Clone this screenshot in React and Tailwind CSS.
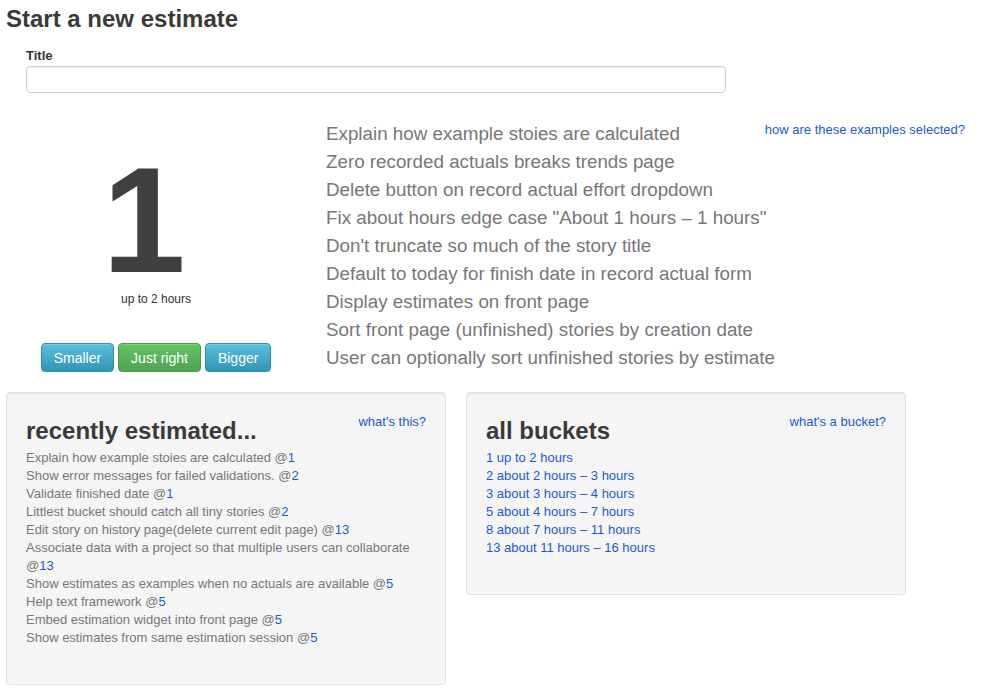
export default function App() {
  const examples = [
    "Explain how example stoies are calculated",
    "Zero recorded actuals breaks trends page",
    "Delete button on record actual effort dropdown",
    'Fix about hours edge case "About 1 hours \u2013 1 hours"',
    "Don't truncate so much of the story title",
    "Default to today for finish date in record actual form",
    "Display estimates on front page",
    "Sort front page (unfinished) stories by creation date",
    "User can optionally sort unfinished stories by estimate",
  ];
  const recent = [
    ["Explain how example stoies are calculated", "1"],
    ["Show error messages for failed validations.", "2"],
    ["Validate finished date", "1"],
    ["Littlest bucket should catch all tiny stories", "2"],
    ["Edit story on history page(delete current edit page)", "13"],
    ["Associate data with a project so that multiple users can collaborate", "13"],
    ["Show estimates as examples when no actuals are available", "5"],
    ["Help text framework", "5"],
    ["Embed estimation widget into front page", "5"],
    ["Show estimates from same estimation session", "5"],
  ];
  const buckets = [
    "1 up to 2 hours",
    "2 about 2 hours \u2013 3 hours",
    "3 about 3 hours \u2013 4 hours",
    "5 about 4 hours \u2013 7 hours",
    "8 about 7 hours \u2013 11 hours",
    "13 about 11 hours \u2013 16 hours",
  ];
  const link = "text-[#1a5bd1]";
  return (
    <div className="min-h-screen bg-white font-['Liberation_Sans',Arial,sans-serif] text-[#333]">
      <h1 className="pl-[6px] pt-0 text-[24px] font-bold leading-[38px] text-[#3a3a3a]">
        Start a new estimate
      </h1>
      <div className="pl-[26px]">
        <label className="block pt-[9px] text-[13px] font-bold leading-[18px] text-[#333]">Title</label>
        <input
          type="text"
          className="mt-[1px] block h-[27px] w-[700px] rounded-[4px] border border-[#cccccc] bg-white px-2 text-[14px] shadow-[inset_0_1px_1px_rgba(0,0,0,0.075)] outline-none"
        />
        <div className="mt-[27px] flex w-[939px]">
          <div className="flex w-[260px] shrink-0 flex-col items-center pt-[45px]">
            <div className="mr-[24px] text-[150px] font-bold leading-[110px] text-[#404040]">1</div>
            <div className="mt-[15px] text-[12px] leading-[18px] text-[#333]">up to 2 hours</div>
            <div className="mt-[35px] flex gap-[4px]">
              <button className="h-[29px] rounded-[4px] border border-[#2f8fb0] bg-gradient-to-b from-[#5bc0de] to-[#2f96b4] px-[12px] text-[14px] leading-[20px] text-white shadow-[inset_0_1px_0_rgba(255,255,255,0.2)]">
                Smaller
              </button>
              <button className="h-[29px] rounded-[4px] border border-[#4a9a4a] bg-gradient-to-b from-[#62c462] to-[#51a351] px-[12px] text-[14px] leading-[20px] text-white shadow-[inset_0_1px_0_rgba(255,255,255,0.2)]">
                Just right
              </button>
              <button className="h-[29px] rounded-[4px] border border-[#2f8fb0] bg-gradient-to-b from-[#5bc0de] to-[#2f96b4] px-[12px] text-[14px] leading-[20px] text-white shadow-[inset_0_1px_0_rgba(255,255,255,0.2)]">
                Bigger
              </button>
            </div>
          </div>
          <div className="relative ml-[40px] flex-1">
            <ul className="whitespace-nowrap">
              {examples.map((e) => (
                <li key={e} className="text-[18.8px] leading-[28px] text-[#777]">
                  {e}
                </li>
              ))}
            </ul>
            <a className={`${link} absolute right-0 top-[1px] whitespace-nowrap text-[13px] leading-[18px]`} href="#">
              how are these examples selected?
            </a>
          </div>
        </div>
      </div>
      <div className="mt-[20px] flex gap-[20px] pl-[6px]">
        <div className="w-[440px] self-start rounded-[4px] border border-[#e3e3e3] bg-[#f5f5f5] px-[19px] pb-[37px] pt-[19px] shadow-[inset_0_1px_1px_rgba(0,0,0,0.05)]">
          <div className="flex items-start justify-between">
            <h2 className="text-[24px] font-bold leading-[37px] text-[#3a3a3a]">recently estimated...</h2>
            <a className={`${link} text-[13px] leading-[20px]`} href="#">
              what's this?
            </a>
          </div>
          <ul>
            {recent.map(([t, n]) => (
              <li key={t} className="text-[13px] leading-[18px] text-[#777]">
                {t} @<a className={link} href="#">{n}</a>
              </li>
            ))}
          </ul>
        </div>
        <div className="w-[440px] self-start rounded-[4px] border border-[#e3e3e3] bg-[#f5f5f5] px-[19px] pb-[37px] pt-[19px] shadow-[inset_0_1px_1px_rgba(0,0,0,0.05)]">
          <div className="flex items-start justify-between">
            <h2 className="text-[24px] font-bold leading-[37px] text-[#3a3a3a]">all buckets</h2>
            <a className={`${link} text-[13px] leading-[20px]`} href="#">
              what's a bucket?
            </a>
          </div>
          <ul>
            {buckets.map((b) => (
              <li key={b} className="text-[13px] leading-[18px]">
                <a className={link} href="#">{b}</a>
              </li>
            ))}
          </ul>
        </div>
      </div>
    </div>
  );
}
